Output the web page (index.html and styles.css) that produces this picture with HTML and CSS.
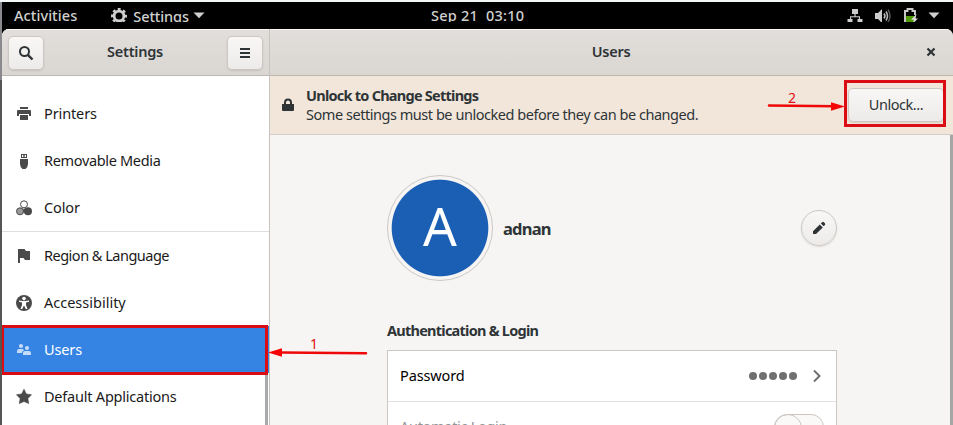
FILE: index.html
```html
<!DOCTYPE html>
<html lang="en">
<head>
<meta charset="utf-8">
<title>Settings</title>
<link rel="stylesheet" href="styles.css">
</head>
<body>
<div class="screen">
  <header class="topbar">
    <span class="activities">Activities</span>
    <span class="appmenu">
      <svg width="16" height="16" viewBox="0 0 16 16"><circle cx="8" cy="8" r="4.9" fill="none" stroke="#d0d0d0" stroke-width="2.8"/><circle cx="8" cy="8" r="6.9" fill="none" stroke="#d0d0d0" stroke-width="2.2" stroke-dasharray="2.9 2.519" stroke-dashoffset="1.45"/></svg>
      <span class="apptitle">Settings</span>
      <svg width="12" height="7" viewBox="0 0 12 7"><path d="M.5.5h11L6 6.3z" fill="#d0d0d0"/></svg>
    </span>
    <span class="clock">Sep 21&nbsp; 03:10</span>
    <span class="tray">
      <svg width="16" height="16" viewBox="0 0 16 16" fill="#ccc"><path d="M5 1h6v5H8.600v2.200H13V11h2.500v4.500h-5V11h1.400V9.300H4.100V11h1.400v4.500h-5V11H3V8.200h4.400V6H5z"/></svg>
      <svg width="16" height="16" viewBox="0 0 16 16"><path d="M0 5h3l4-4v14l-4-4H0z" fill="#ccc"/><path d="M9 5.500q1.800 2.500 0 5M11 3.500q3 4.500 0 9" fill="none" stroke="#bbb" stroke-width="1.600"/><path d="M13 1.500q4 6.500 0 13" fill="none" stroke="#555" stroke-width="1.500"/></svg>
      <svg width="16" height="16" viewBox="0 0 16 16"><path d="M3 8h8v6H3z" fill="#4e9a06"/><path d="M8 15H2V3h2.500V1h5v2H12v4" fill="none" stroke="#ccc" stroke-width="1.900"/><path d="M13.500 6 8 11.700h3L9.500 16l5.500-5.500h-2.500z" fill="#ddd"/></svg>
      <svg width="12" height="7" viewBox="0 0 12 7"><path d="M.5.5h11L6 6.300z" fill="#d0d0d0"/></svg>
    </span>
  </header>
  <div class="window">
    <aside class="sidebar">
      <div class="headerbar side-head">
        <button class="btn square"><svg width="16" height="16" viewBox="0 0 16 16" fill="none" stroke="#2e3436"><circle cx="6.500" cy="6.500" r="4.500" stroke-width="2"/><path d="m9.800 9.800 4.700 4.700" stroke-width="2.400"/></svg></button>
        <span class="title side-title">Settings</span>
        <button class="btn square"><svg width="16" height="16" viewBox="0 0 16 16" fill="#2e3436"><path d="M3 3h10v2H3zM3 7h10v2H3zM3 11h10v2H3z"/></svg></button>
      </div>
      <nav class="list">
        <div class="row"><svg viewBox="0 0 16 16"><path d="M4 1h8v2H4zM2 4h12q1 0 1 1v5h-2V8H3v2H1V5q0-1 1-1zM4 9h8v5H4z"/></svg><span>Printers</span></div>
        <div class="row"><svg viewBox="0 0 16 16"><path fill-rule="evenodd" d="M5 1h6v4H5zM6 2v2h1.300V2zM8.700 2v2H10V2zM4 6h8v5q0 2.800-2.500 5h-3Q4 13.800 4 11z"/></svg><span class="tight">Removable Media</span></div>
        <div class="row"><svg viewBox="0 0 16 16"><circle cx="8" cy="4.300" r="3.500" fill="#fff" stroke="#4a4a4a"/><circle cx="4" cy="11.300" r="3.500" fill="#999" stroke="#4a4a4a"/><circle cx="12" cy="11.300" r="4"/><path d="m8 7.800 2 3.500-2 2.500-1-3z"/></svg><span>Color</span></div>
        <div class="row divided"><svg viewBox="0 0 16 16"><path d="M2 1h6.500l1.500 2h4v9H9l-1.500-2H4v5H2z"/></svg><span class="tighter">Region &amp; Language</span></div>
        <div class="row"><svg viewBox="0 0 16 16"><circle cx="8" cy="8" r="8"/><circle cx="8" cy="3.600" r="1.800" fill="#fff"/><path d="M3 5.500 6.500 6h3l3.500-.5v1.300l-3 .8v2.400l1.500 4h-1.700L8 10.600 6.200 14H4.500L6 10V7.600l-3-.8z" fill="#fff"/></svg><span class="normal">Accessibility</span></div>
        <div class="row selected"><svg viewBox="0 0 16 16"><circle cx="5" cy="4" r="2.100"/><circle cx="11" cy="6" r="2.100"/><path d="M1 11V9q0-2 2-2h3q1.600 0 2 1.200Q6.200 9 6 11zM7 13v-2q0-2 2-2h4q2 0 2 2v2z"/></svg><span>Users</span></div>
        <div class="row"><svg viewBox="0 0 16 16"><path d="m8 .2 2.300 4.700 5.200.8-3.600 3.800.8 5L8 12.500 3.300 14.500l.8-5L.5 5.700l5.200-.8z" stroke="#4a4a4a" stroke-width=".6" stroke-linejoin="round"/></svg><span class="snug">Default Applications</span></div>
      </nav>
      <div class="side-scroll"></div>
      <div class="mark mark-users"></div>
    </aside>
    <main class="content">
      <div class="headerbar main-head">
        <span class="title main-title">Users</span>
        <svg class="close" width="10" height="10" viewBox="0 0 10 10"><path d="m1.500 1.500 7 7m0-7-7 7" stroke="#2e3436" stroke-width="2.200"/></svg>
      </div>
      <div class="banner">
        <svg class="lock" width="12" height="14" viewBox="0 0 12 14"><path d="M0 6h12v6q0 1-1 1H1q-1 0-1-1z" fill="#2e3436"/><path d="M3 7V4.500q0-3 3-3t3 3V7" fill="none" stroke="#2e3436" stroke-width="2"/></svg>
        <div class="message"><div><b class="heading">Unlock to Change Settings</b></div><div><span class="detail">Some settings must be unlocked before they can be changed.</span></div></div>
        <button class="btn unlock"><span>Unlock...</span></button>
        <div class="mark mark-unlock"></div>
      </div>
      <div class="body">
        <div class="panel">
          <div class="profile">
            <div class="avatar"><span>A</span></div>
            <b class="name">adnan</b>
            <button class="btn edit"><svg width="16" height="16" viewBox="0 0 16 16" fill="#2e3436"><path d="M2 11.200 8.800 4.500l3 3L5 14H2zM9.800 3.500l1.300-1.300q.9-.7 1.800 0l1 1q.8.900 0 1.800l-1.200 1.300z"/></svg></button>
          </div>
          <div class="section"><b class="heading">Authentication &amp; Login</b></div>
          <div class="card">
            <div class="card-row"><span class="label">Password</span><span class="dots"><i></i><i></i><i></i><i></i><i></i></span><svg width="8" height="12" viewBox="0 0 8 12"><path d="m1 .5 5.500 5.500L1 11.500" fill="none" stroke="#707070" stroke-width="2"/></svg></div>
            <div class="card-row disabled"><span class="label">Automatic Login</span><span class="switch"></span></div>
          </div>
        </div>
        <div class="main-scroll"></div>
      </div>
    </main>
  </div>
  <svg class="arrow arrow-one" width="102" height="22" viewBox="0 0 102 22"><path d="M14 12.500 99 13.300" stroke="#ee0808" stroke-width="2.600" stroke-linecap="round"/><path d="m1 12.500 14-4.300v8.600z" fill="#f50505"/></svg>
  <span class="num num-one">1</span>
  <svg class="arrow arrow-two" width="80" height="12" viewBox="0 0 80 12"><path d="m2 5.500 66 .7" stroke="#ee0808" stroke-width="2.600" stroke-linecap="round"/><path d="m78 6.500-14-4.300v8.600z" fill="#f50505"/></svg>
  <span class="num num-two">2</span>
</div>
</body>
</html>
```
FILE: styles.css
```css
* { box-sizing: border-box; }
body { margin: 0; font: 14.5px/19px "Noto Sans", "Open Sans", sans-serif; color: #2e3436; }
svg { display: block; flex: none; }
span, b { white-space: nowrap; }
.screen { position: relative; width: 953px; height: 425px; overflow: hidden; padding: 2px 0 0 2px; background: linear-gradient(#8a8a8e 0 80px, #555 80px); display: flex; flex-direction: column; }
.screen::before { content: ""; position: absolute; left: 0; right: 0; top: 0; height: 2px; background: #f3f7f8; }
.topbar { position: relative; height: 27px; flex: none; background: #000; color: #d0d0d0; display: flex; align-items: center; padding: 0 13px 0 12px; font-weight: 500; }
.activities { letter-spacing: .08px; }
.appmenu { display: flex; align-items: center; margin-left: 34px; gap: 6px; }
.apptitle { margin-right: -2px; letter-spacing: -.1px; line-height: 22px; }
.clock { position: absolute; left: 429px; top: 4px; letter-spacing: .23px; }
.tray { margin-left: auto; display: flex; align-items: center; }
.tray svg { margin-right: 12px; }
.tray svg:nth-child(3) { margin-right: 9px; }
.tray svg:last-child { margin: 0; }
.window { flex: 1; min-height: 0; display: flex; background: #f6f5f4; border-radius: 7px 7px 0 0; overflow: hidden; box-shadow: 0 -7px 0 7px #000; clip-path: inset(-7px 0 0); }
.headerbar { height: 47px; flex: none; border-top: 1px solid #f8f7f6; border-bottom: 1px solid #bfb8b1; background: linear-gradient(#e1dedb, #dad6d2); display: flex; align-items: center; }
.title { font-weight: 600; letter-spacing: -.25px; padding: 0 1px 2px 0; }
.sidebar { position: relative; width: 268px; flex: none; background: #fff; border-right: 1px solid #c6c2be; display: flex; flex-direction: column; }
.side-head { justify-content: space-between; padding: 0 6px 0 6px; }
.btn { font: inherit; color: #2e3436; border: 1px solid #cdc7c2; border-radius: 5px; background: linear-gradient(#f8f7f6, #edebe9); box-shadow: 0 1px 2px #0000001a; padding: 0; display: flex; align-items: center; justify-content: center; }
.square { width: 36px; height: 34px; }
.list { padding-top: 14px; color: #1a1a1a; letter-spacing: -.12px; }
.row { height: 47px; display: flex; align-items: center; padding-left: 14px; gap: 12px; }
.row svg { width: 16px; height: 16px; fill: #4a4a4a; }
.normal { letter-spacing: 0; }
.snug { letter-spacing: -.22px; }
.tight { letter-spacing: -.33px; }
.tighter { letter-spacing: -.5px; }
.divided { height: 48px; border-top: 1px solid #e0dedc; }
.selected { background: #3584e4; color: #fff; }
.selected svg { fill: #c5dbf7; }
.side-scroll { position: absolute; right: 1px; bottom: 0; width: 3px; height: 52px; background: #a8abab; }
.mark { position: absolute; border: 3px solid #dc0c14; }
.mark-users { left: -1px; top: 296px; width: 267px; height: 50px; }
.content { flex: 1; display: flex; flex-direction: column; min-width: 0; }
.main-head { position: relative; justify-content: center; }
.close { position: absolute; right: 17px; top: 17px; }
.banner { position: relative; height: 59px; flex: none; background: #f2e6db; border-bottom: 1px solid #d5cfc9; display: flex; align-items: center; padding: 0 9px 0 12px; }
.message { margin-left: 12px; }
.heading { font-weight: 700; letter-spacing: -.75px; }
.detail { letter-spacing: -.46px; }
.unlock { margin-left: auto; width: 96px; height: 34px; letter-spacing: -.45px; padding-bottom: 2px; }
.mark-unlock { left: 574px; top: 4px; width: 102px; height: 47px; }
.body { flex: 1; display: flex; justify-content: space-between; min-height: 0; }
.panel { width: 450px; margin-left: 117px; padding-top: 40px; }
.main-scroll { width: 3px; background: #a5a6a6; }
.profile { height: 106px; display: flex; align-items: center; }
.avatar { width: 106px; height: 106px; border: 1px solid #cdc7c2; border-radius: 50%; display: flex; align-items: center; justify-content: center; background: radial-gradient(circle, #1b5fb4 0 47.800px, #f6f5f4 48.800px); color: #fff; }
.avatar span { font-size: 53px; line-height: 60px; padding-bottom: 4px; }
.name { margin-left: 10px; font-size: 16.500px; letter-spacing: -.8px; }
.edit { width: 36px; height: 36px; border-radius: 50%; margin-left: auto; }
.section { margin-top: 40px; height: 29px; }
.card { height: 110px; background: #fff; border: 1px solid #cdc7c2; }
.card-row { height: 51px; display: flex; align-items: center; padding: 0 15px 0 12px; color: #000; border-bottom: 1px solid #e4e2e0; }
.label { letter-spacing: -.12px; padding-bottom: 1px; }
.dots { margin-left: auto; margin-right: 16px; display: flex; gap: 2px; }
.dots i { width: 8px; height: 8px; border-radius: 50%; background: #707070; }
.disabled { color: #929595; padding-right: 12px; }
.disabled .label { letter-spacing: -.3px; padding-bottom: 2px; }
.switch { position: relative; margin-left: auto; width: 50px; height: 26px; border: 1px solid #cdc7c2; border-radius: 13px; background: #faf9f8; }
.switch::before { content: ""; position: absolute; left: -1px; top: -1px; width: 26px; height: 26px; border: 1px solid #cdc7c2; border-radius: 50%; }
.arrow { position: absolute; }
.arrow-one { left: 267px; top: 340px; }
.arrow-two { left: 767px; top: 100px; }
.num { position: absolute; color: #e01010; font-size: 14px; }
.num-one { left: 310px; top: 334px; }
.num-two { left: 788px; top: 88px; }
```
